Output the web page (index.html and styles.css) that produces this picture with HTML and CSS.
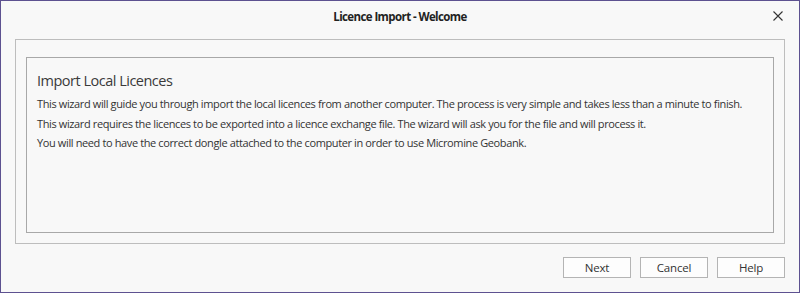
FILE: index.html
```html
<!DOCTYPE html>
<html>
<head>
<meta charset="utf-8">
<link rel="stylesheet" href="styles.css">
</head>
<body>
<div class="window">
  <div class="titlebar">
    <span class="title">Licence Import - Welcome</span>
    <svg class="close" width="10" height="10" viewBox="0 0 10 10"><path d="M0.5 0.5 L9.5 9.5 M9.5 0.5 L0.5 9.5" stroke="#333" stroke-width="1.1" fill="none"/></svg>
  </div>
  <div class="outer">
    <div class="inner">
      <div class="heading">Import Local Licences</div>
      <p class="line">This wizard will guide you through import the local licences from another computer. The process is very simple and takes less than a minute to finish.</p>
      <p class="line">This wizard requires the licences to be exported into a licence exchange file. The wizard will ask you for the file and will process it.</p>
      <p class="line">You will need to have the correct dongle attached to the computer in order to use Micromine Geobank.</p>
    </div>
  </div>
  <div class="buttons">
    <button class="btn">Next</button>
    <button class="btn">Cancel</button>
    <button class="btn">Help</button>
  </div>
</div>
</body>
</html>
```
FILE: styles.css
```css
html, body {
  margin: 0;
  padding: 0;
  background: #f8f8f8;
}
.window {
  box-sizing: border-box;
  width: 800px;
  height: 293px;
  border: 1px solid #5d5190;
  background: #f8f8f8;
  display: flex;
  flex-direction: column;
  font-family: "Open Sans", "Noto Sans", sans-serif;
  color: #333;
}
.titlebar {
  position: relative;
  height: 30px;
  display: flex;
  align-items: center;
  justify-content: center;
}
.title {
  font-size: 11.5px;
  font-weight: 700;
  letter-spacing: -0.6px;
  color: #222;
  margin-top: 1px;
}
.close {
  position: absolute;
  right: 16px;
  top: 10px;
}
.outer {
  box-sizing: border-box;
  margin: 8px 14px 0 14px;
  height: 205px;
  border: 1px solid #bdbdbd;
  padding: 17px 10px 10px 10px;
  display: flex;
}
.inner {
  box-sizing: border-box;
  flex: 1;
  border: 1px solid #a8a8a8;
  padding: 13px 10px 0 10px;
}
.heading {
  font-size: 14.5px;
  letter-spacing: -0.5px;
  color: #3a3a3a;
  line-height: 20px;
  margin-bottom: 3px;
}
.line {
  margin: 0;
  font-size: 11px;
  letter-spacing: -0.38px;
  line-height: 19.5px;
  white-space: nowrap;
  color: #333;
}
.buttons {
  display: flex;
  justify-content: flex-end;
  gap: 9px;
  margin: 13px 14px 0 0;
}
.btn {
  box-sizing: border-box;
  width: 68px;
  height: 21px;
  border: 1px solid #b4b4b4;
  background: #fdfdfd;
  font-family: "Open Sans", "Noto Sans", sans-serif;
  font-size: 11.5px;
  letter-spacing: -0.2px;
  color: #333;
  padding: 0;
  border-radius: 0;
}
```
